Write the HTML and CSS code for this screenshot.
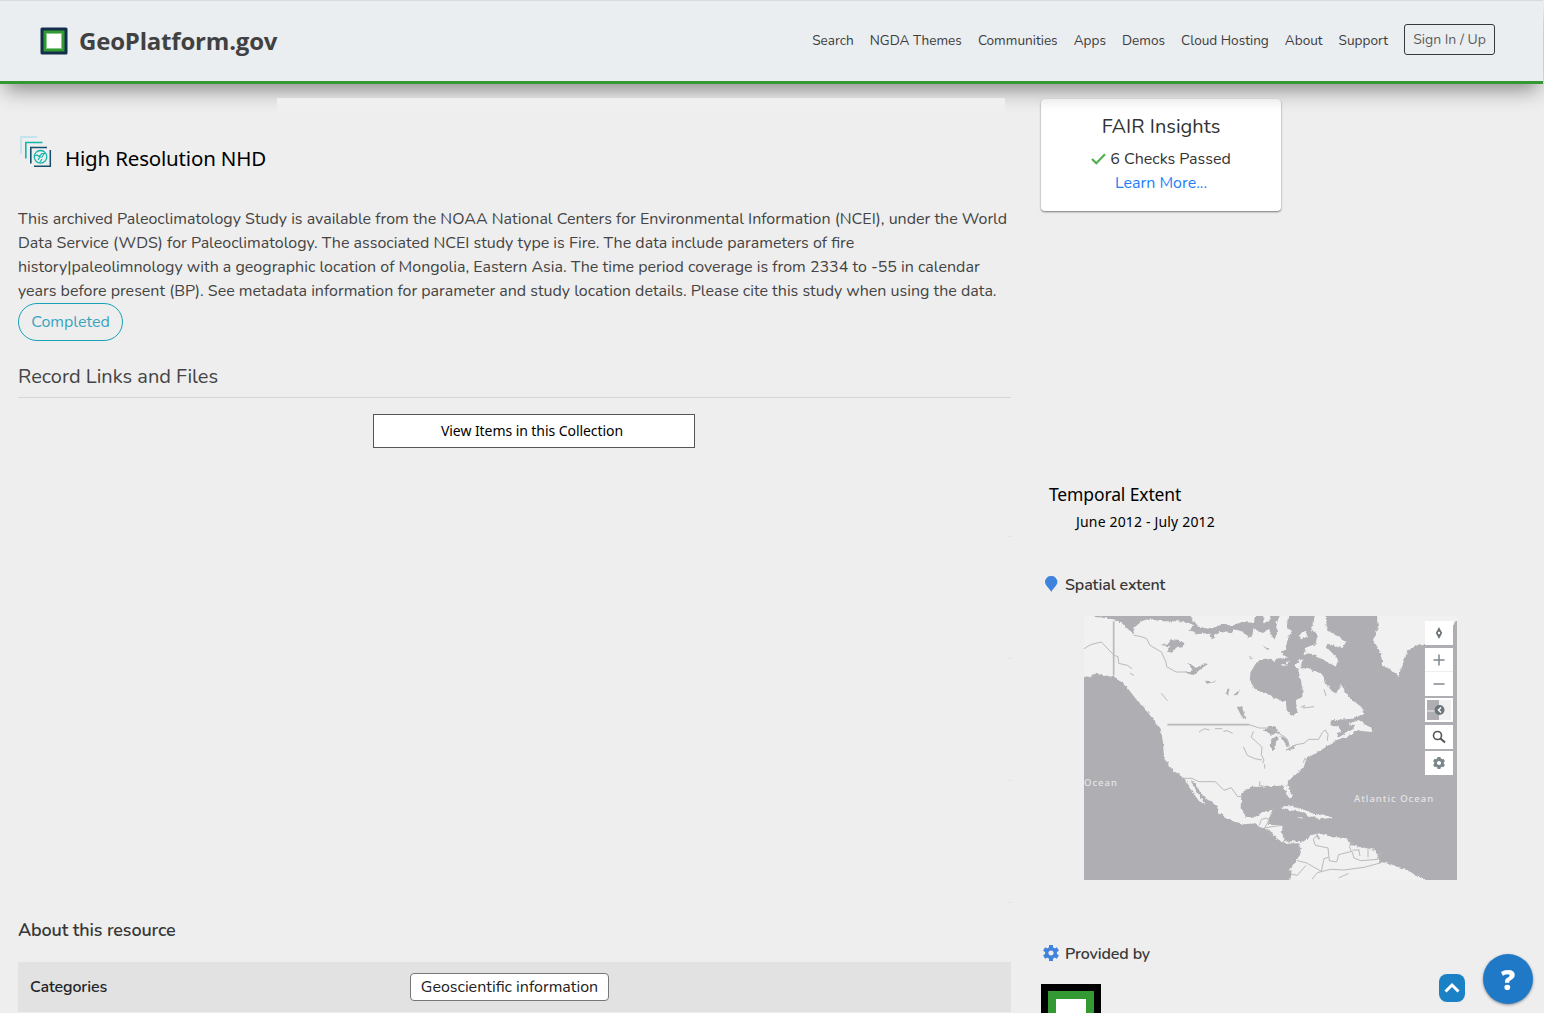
FILE: index.html
```html
<!DOCTYPE html>
<html lang="en">
<head>
<meta charset="utf-8">
<title>High Resolution NHD - GeoPlatform.gov</title>
<link rel="stylesheet" href="styles.css">
</head>
<body>
<header class="site-header">
  <a class="brand">
    <svg class="brand-mark" width="28" height="28" viewBox="0 0 28 28"><rect x=".5" y=".5" width="27" height="27" rx="1.5" fill="#132e4b"/><rect x="3.5" y="3.5" width="21" height="21" fill="#339933"/><rect x="6" y="6" width="16" height="16" fill="#8bc98b"/><rect x="7" y="7" width="14" height="14" fill="#fff"/></svg>
    <span class="brand-name">GeoPlatform.gov</span>
  </a>
  <nav class="nav">
    <a>Search</a><a>NGDA Themes</a><a>Communities</a><a>Apps</a><a>Demos</a><a>Cloud Hosting</a><a>About</a><a>Support</a>
    <a class="sign-in">Sign In / Up</a>
  </nav>
</header>
<div class="title-cover"></div>
<main class="layout">
  <section class="record">
    <div class="record-title">
      <svg width="32" height="32" viewBox="0 0 32 32" fill="none"><path d="M1 18V1h16" stroke="#c5e2ef" stroke-width="2"/><path d="M5.800 22.500V6.500H22.500" stroke="#10b5ab" stroke-width="1.600"/><path d="M10.800 27.500V11.500H27" stroke="#17506f" stroke-width="1.600"/><path d="M14 30.300H30.300V14" stroke="#17506f" stroke-width="1.500"/><circle cx="20.500" cy="20.800" r="6.300" stroke="#10b5ab" stroke-width="1.300"/><path d="M14.500 20l2.500-1 2 1.500 3-3 3 0M18 24l2-3 2 0 2-3M20 26l2-3" stroke="#10b5ab" stroke-width="1.200"/></svg>
      <h1>High Resolution NHD</h1>
    </div>
    <p class="summary">This archived Paleoclimatology Study is available from the NOAA National Centers for Environmental Information (NCEI), under the World Data Service (WDS) for Paleoclimatology. The associated NCEI study type is Fire. The data include parameters of fire history|paleolimnology with a geographic location of Mongolia, Eastern Asia. The time period coverage is from 2334 to -55 in calendar years before present (BP). See metadata information for parameter and study location details. Please cite this study when using the data.</p>
    <span class="status">Completed</span>
    <h2 class="links-heading">Record Links and Files</h2>
    <a class="view-items">View Items in this Collection</a>
    <div class="slots"><i></i><i></i><i></i><i></i></div>
    <h3 class="about-heading">About this resource</h3>
    <dl class="facts">
      <dt>Categories</dt>
      <dd>Geoscientific information</dd>
    </dl>
  </section>
  <aside class="side">
    <div class="fair">
      <h2>FAIR Insights</h2>
      <div class="checks"><svg width="15" height="12" viewBox="0 0 15 12"><path d="M1 6l4.300 4.300L14 1.300" fill="none" stroke="#4caf50" stroke-width="2.200"/></svg>6 Checks Passed</div>
      <a>Learn More...</a>
    </div>
    <div class="temporal">
      <h2>Temporal Extent</h2>
      <p>June 2012 - July 2012</p>
    </div>
    <h3 class="side-heading"><svg width="14" height="17" viewBox="0 0 14 17"><path d="M7.300 16C5.800 13 1 9.500 1 6.100a6.200 6.200 0 0 1 12.400 0C13.400 9.500 8.800 13 7.300 16z" fill="#3f83dc"/></svg>Spatial extent</h3>
    <div class="map">
      <svg class="map-drawing" width="373" height="264" viewBox="0 0 1119 792">
        <defs><filter id="coast" filterUnits="userSpaceOnUse" x="-30" y="-30" width="1190" height="860"><feTurbulence type="fractalNoise" baseFrequency=".09" numOctaves="3" seed="4"/><feDisplacementMap in="SourceGraphic" scale="11" xChannelSelector="R" yChannelSelector="G"/></filter></defs>
        <rect width="1122" height="795" fill="#afaeb3"/>
        <g filter="url(#coast)">
          <path fill="#f1f1f1" d="M-30-30H650L646 40 640 70 648 118 655 135 648 158 688 153 718 178 723 203 738 208 763 183 778 218 798 248 833 273 838 293 808 308 743 313 738 328 768 333 818 308 833 318 858 333 863 348 813 343 808 353 748 378 712 402 668 427 658 457 613 492 610 507 623 537 623 549 608 537 598 509 530 512 500 512 472 532 470 577 485 602 515 605 535 587 565 582 563 595 555 602 552 627 596 627 593 652 603 677 648 675 648 682 683 657 708 652 743 662 788 667 798 687 873 702 888 737 928 747 968 762 1030 795V815H615L623 767 618 762 648 717 653 697 638 682 603 684 578 667 558 644 525 632 515 622 480 625 440 612 405 592 400 572 350 532 335 502 320 495 345 537 365 567 345 555 325 527 300 485 270 467 240 427 237 375 230 338 210 313 190 288 175 268 155 248 140 228 120 203 90 183 35 173-30 200z"/>
          <path fill="#f1f1f1" d="M876-30H1150V8L1119 16 1100 30V82L1025 82 1000 88 970 105 957 145 944 180 925 165 897 147 887 105 867 70 882 35zM588 571l35 0 45 13 33 16-20 2-30-15-50-7zM693 592l30 5 22 8-30 4-20-3zM643 603l15 2-8 3z"/>
          <g fill="#afaeb3" transform="translate(0 -12)">
            <path d="M30-10L32 14 88 22 110 30 150 68 148 50 165 35 195 22 240 28 300 28 330 40 315 55 345 66 378 62 385 88 392 70 410 60 445 64 452 52 480 60 492 78 505 70 508 48 530 62 555 52 570 84 582 60 576 36 588 10 580-10z"/>
            <path d="M612-20V14l-4 34 16 8-14 28-4 28-20 14-14 18 6 14 26-2 14 12 16-8 12-16 12 16 28 16 24 6 20 26 6 24 18 12 14-16 8-36h40L800 60 740-20z"/>
            <path d="M515 155l25-16 25 6 35 15 40 5 8 30 8 35-1 25-20 10 5 35-15 12-17-17-2-25-31-8-30-20-30-7-18-30 3-25z"/>
            <path d="M230 98l24-4 8-12 24 2 2 6 10 0-2 16-20 2-12 14-16-4 12-14zM304 182l22-8-16-22 10 4 16 12 26-14 10 2-18 12-18 14-8 8zM364 206l34 3-30 6zM424 246l8-18 4 6-4 16zM448 250l20-18-8 18zM458 284l16 0 6 20 4 20-10-8zM537 102l20 8-6 4zM485 131l24 5-4 3z"/>
            <path d="M540 356l12-14 18 0 16 20-22 6zM560 404l2-22 16-10 6 6-8 10-2 26-10 0zM588 372l22 8 6 18-8 8-8-18zM603 414l34-16-10 14zM740 326l84-6-18 32-42 24-6-12 14-6-12-18z"/>
          </g>
          <g fill="#f1f1f1" transform="translate(0 -12)"><path d="M295-10h230l-17 42-34-2-24 10-40-2-30 14-36-8-20-24zM538-10h26l-8 38-18 6zM700-10h22l8 66 26 14 32 20-16 18-40-12-6 8 36 36-6 24-40-22-34-14-22-20 34-8 6-28-18-22zM648 66l18-8 4 16-16 6zM574 104l10 2 6 18 20 12-36 8-10-10zM606 150l10-2-6 10zM640 146l18-4-8 14zM792 336l30-10-4 14zM664 112l24 8-30 10z"/></g>
          <g fill="none" stroke="#f1f1f1" stroke-width="5"><path d="M120 193l30 8 30 42 6 25M140 208l20 34M195 273l40 7M210 303l34 18 8 22M155 35l20-18 26-8"/></g>
        </g>
        <g fill="none" stroke="#bababc" stroke-width="3" transform="translate(0 -12)">
          <path stroke-width="5" d="M89 28V191M250 338H496"/>
          <path d="M496 338l30 10 30 0 24 14 24 14 10 20M606 414l30-16 24-4 14-12 30 0 12-22 8-6 8 14-2 18"/>
          <path d="M300 499l24 0 20 10h50l26 26 22-8 18 26 16 1M0 110l20-12 32-8 38 40 12 4 2 20 26 6 14 10M138 184l12 6M150 70l22 4 16 6 10 20 34 20 14 30 2 14 28 16 32 0M232 244l18 22M345 360l16-10 16 4M393 350h22M418 358l12-2 16 8M508 358l-6 18 18 16 14 14-2 22 8 16-4 10M478 404l12 26 22 10 22 4M542 456v14M528 508l-2 12 18 4M720 232l6 20M650 286l12-6-4 8 32-4M658 452l4-12 8 4-6 10"/>
          <path d="M700 668l-12 14 6 18 38 8 4 38 22 4 6-22 40-10 6 20 20 8 52-4 8-22M640 746l26 6 46 26 8-38 14-4M666 760l-26 30-20-4M684 802l16-20 40-10 40 2 60-8 52-14M764 798l30-14M802 718l-6-14 10-12M828 732l-4-20M852 736v-24M806 714l20 0M526 640l6-18 16-4 6 8-12 22 22-4 30-4M546 654l10 0 6 12M596 694l6-12"/>
          <path stroke-width="6" d="M698 668l8 14"/>
        </g>
      </svg>
      <span class="ocean pacific">Ocean</span>
      <span class="ocean atlantic">Atlantic Ocean</span>
      <div class="map-tools">
        <b><svg viewBox="0 0 28 24"><path d="M14 6l3.200 6-3.200 6-3.200-6z" fill="#6b767b"/><circle cx="14" cy="12" r="1.200" fill="#fff"/></svg></b>
        <b class="zoom-in"><svg viewBox="0 0 28 24"><path d="M8.500 12h11M14 6.500v11" stroke="#7e888d" stroke-width="1.500"/></svg></b>
        <b><svg viewBox="0 0 28 24"><path d="M8.500 12h11" stroke="#7e888d" stroke-width="1.500"/></svg></b>
        <b><svg viewBox="0 0 28 24"><path d="M2 2h12v20H2z" fill="#afaeb3"/><path d="M14 2h12v20H14z" fill="#f1f1f1"/><path d="M2 13h9" stroke="#eee"/><circle cx="14.500" cy="12" r="5" fill="#6b767b"/><path d="M16 9.500L13.500 12l2.500 2.500" fill="none" stroke="#fff" stroke-width="1.500"/></svg></b>
        <b><svg viewBox="0 0 28 24"><circle cx="12.500" cy="10.500" r="4" fill="none" stroke="#555" stroke-width="1.600"/><path d="M15.500 13.500l4.500 4" stroke="#555" stroke-width="2"/></svg></b>
        <b><svg viewBox="0 0 28 24"><g transform="translate(14 12)"><circle r="3.500" fill="none" stroke="#7b868b" stroke-width="2.800"/><path d="M0-6v2M0 6v-2M5.200-3l-1.700 1M-5.200 3l1.700-1M-5.200-3l1.700 1M5.200 3l-1.700-1" stroke="#7b868b" stroke-width="3"/></g></svg></b>
      </div>
    </div>
    <h3 class="side-heading provided"><svg width="16" height="16" viewBox="-8 -8 16 16"><circle r="4.300" fill="none" stroke="#3f83dc" stroke-width="3.400"/><path d="M0-8v3M0 8v-3M6.900-4l-2.500 1.500M-6.900 4l2.500-1.500M-6.900-4l2.500 1.500M6.900 4l-2.500-1.500" stroke="#3f83dc" stroke-width="4"/></svg>Provided by</h3>
    <svg class="provider" width="60" height="60" viewBox="0 0 60 60"><path d="M0 0h60v60H0z"/><path d="M7 7h46v46H7z" fill="#339933"/><path d="M15 15h30v30H15z" fill="#fff"/></svg>
  </aside>
</main>
<a class="to-top"><svg width="26" height="28" viewBox="0 0 26 28"><path d="M6.500 17.500L13 11l6.500 6.500" fill="none" stroke="#fff" stroke-width="3"/></svg></a>
<a class="help">?</a>
</body>
</html>
```
FILE: styles.css
```css
* { box-sizing: border-box; }
html, body { height: 1013px; overflow: hidden; }
body { margin: 0; position: relative; background: #eee; color: #444; font: 400 16px/24px Nunito, Lato, sans-serif; }
h1, h2, h3, p, dl, dd { margin: 0; font-weight: 400; }
svg { display: block; }
.site-header { position: relative; z-index: 2; height: 84px; margin-right: 1px; padding: 0 48px 0 40px; display: flex; align-items: center; justify-content: space-between; background: #ebeef1; border-top: 1px solid #d7dbde; border-bottom: 3px solid #339933; box-shadow: 0 10px 20px -5px rgba(0,0,0,.45); }
.brand { display: flex; align-items: center; gap: 11px; }
.brand-name { font: 700 24px/32px "Open Sans", sans-serif; letter-spacing: -.2px; color: #414141; }
.nav { display: flex; align-items: center; gap: 16px; font-size: 13.6px; color: #3c3c3c; }
.sign-in { height: 31px; width: 91px; margin-top: -3px; border: 1px solid #343a40; border-radius: 3px; display: flex; justify-content: center; font-size: 14px; line-height: 29px; color: #5c5c5c; }
.title-cover { position: relative; z-index: 3; height: 14px; width: 728px; margin: 14px 0 -28px 277px; background: #efefef; }
.layout { display: grid; grid-template-columns: 993px 460px; column-gap: 30px; padding-left: 18px; }
.record-title { display: flex; align-items: flex-start; padding: 52px 0 0 2px; gap: 13px; height: 123px; }
.record-title h1 { font: 400 20.5px/30px "Noto Sans", sans-serif; letter-spacing: -.18px; color: #000; padding-top: 7px; }
.summary { height: 96px; }
.status { width: 105px; height: 38px; border: 1px solid #17a2b8; border-radius: 19px; color: #3aa4be; display: flex; justify-content: center; line-height: 36px; }
.links-heading { margin-top: 21px; height: 36px; border-bottom: 1px solid #d6d6d6; font-size: 20px; line-height: 30px; }
.view-items { display: flex; justify-content: center; width: 322px; height: 34px; margin: 16px 0 0 355px; padding-right: 4px; background: #fff; border: 1px solid #555; color: #000; font: 400 14px/31px "Noto Sans", sans-serif; letter-spacing: -.066px; }
.slots { display: grid; grid-template-rows: 89px 122px 122px 122px; }
.slots i { justify-self: end; align-self: end; width: 3px; height: 1px; background: #e3e3e3; }
.about-heading { margin-top: 12px; font-size: 18px; line-height: 30px; font-weight: 600; letter-spacing: -.15px; height: 47px; color: #383838; }
.facts { display: grid; grid-template-columns: 380px 1fr; align-items: center; height: 50px; padding-left: 12px; background: #e2e2e2; }
.facts dt { font-weight: 600; letter-spacing: -.12px; color: #212529; }
.facts dd { justify-self: start; width: 199px; height: 28px; border: 1px solid #777; border-radius: 4px; background: #fff; color: #222; text-align: center; line-height: 26px; }
.fair { width: 240px; height: 112px; margin-top: 15px; padding-top: 13px; background: #fff; border-radius: 4px; box-shadow: 0 1px 2px rgba(0,0,0,.5); text-align: center; color: #333; }
.fair h2 { font-size: 20px; line-height: 30px; margin-bottom: 5px; }
.fair a { color: #2080f7; }
.checks { display: flex; justify-content: center; align-items: center; gap: 4px; }
.temporal { margin: 268px 0 0 8px; color: #000; font-family: "Noto Sans", sans-serif; height: 58px; }
.temporal h2 { font-size: 17.5px; line-height: 30px; letter-spacing: -.13px; }
.temporal p { font-size: 14px; line-height: 26px; padding-left: 27px; letter-spacing: .17px; }
.side-heading { display: flex; align-items: center; gap: 7px; margin: 36px 0 0 3px; font-size: 16px; font-weight: 600; letter-spacing: -.13px; color: #383838; }
.side-heading svg { margin-top: -2px; }
.map { position: relative; width: 373px; height: 264px; margin: 19px 0 0 43px; }
.ocean { position: absolute; color: #e4e4e6; font: 500 9.5px/12px "Noto Sans", sans-serif; letter-spacing: 1px; }
.pacific { left: 0; top: 161px; }
.atlantic { left: 270px; top: 177px; }
.map-tools { position: absolute; left: 341px; top: 5px; display: flex; flex-direction: column; gap: 2.500px; }
.map-tools b { width: 28px; height: 24px; background: #fff; }
.map-tools .zoom-in { border-bottom: 1px solid #eee; margin-bottom: -2.500px; }
.provided { margin-top: 62px; gap: 6px; margin-left: 2px; }
.provider { margin-top: 18px; }
.to-top { position: fixed; left: 1439px; top: 974px; background: #1a82c4; border-radius: 8px; }
.help { position: fixed; left: 1483px; top: 954px; width: 50px; height: 50px; border-radius: 50%; background: #2079c7; box-shadow: 0 1px 3px rgba(0,0,0,.4); color: #fff; text-align: center; font: 800 28px/51px "Open Sans", sans-serif; }
```
